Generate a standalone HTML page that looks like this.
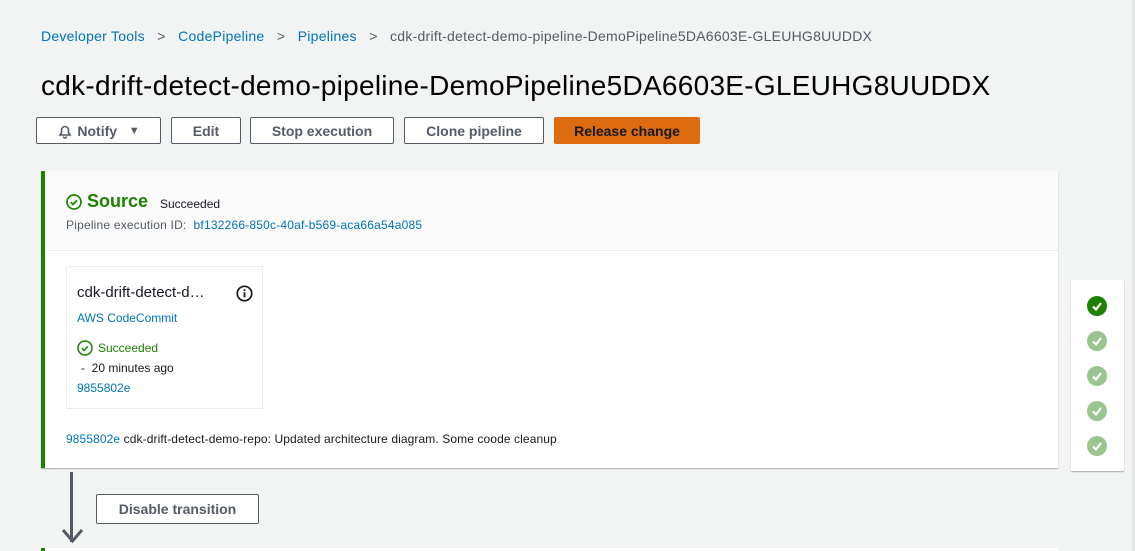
<!DOCTYPE html>
<html><head><style>
body{margin:0;width:1135px;height:551px;background:#f2f3f3;font-family:"Liberation Sans",sans-serif;position:relative;overflow:hidden;color:#16191f}
.a{position:absolute}
.lnk{color:#0073bb}
.btn{position:absolute;top:117px;height:27px;border:1px solid #545b64;background:#fff;border-radius:2px;box-sizing:border-box;font-weight:bold;font-size:14px;color:#545b64;display:flex;align-items:center;justify-content:center}
.chk{position:absolute;left:1087px;width:20px;height:20px;border-radius:50%;background:#9bc58f}
.chk svg{position:absolute;left:0;top:0}
</style></head><body>
<div class="a" style="left:1132px;top:0;width:3px;height:551px;background:#e6e8e8"></div>
<div class="a" style="left:41px;top:28px;font-size:14px;color:#545b64;white-space:nowrap;letter-spacing:0.25px">
<span class="lnk">Developer Tools</span>&nbsp;&nbsp;&nbsp;&gt;&nbsp;&nbsp;&nbsp;<span class="lnk">CodePipeline</span>&nbsp;&nbsp;&nbsp;&gt;&nbsp;&nbsp;&nbsp;<span class="lnk">Pipelines</span>&nbsp;&nbsp;&nbsp;&gt;&nbsp;&nbsp;&nbsp;cdk-drift-detect-demo-pipeline-DemoPipeline5DA6603E-GLEUHG8UUDDX</div>
<div class="a" style="left:41px;top:70px;font-size:28px;white-space:nowrap;letter-spacing:0.27px;color:#000">cdk-drift-detect-demo-pipeline-DemoPipeline5DA6603E-GLEUHG8UUDDX</div>
<div class="btn" style="left:36px;width:125px"><svg width="16" height="16" viewBox="0 0 16 16" style="margin-right:4px"><path d="M3 12h10l-1.5-2V7a3.5 3.5 0 0 0-7 0v3zM6.5 13.5a1.5 1.5 0 0 0 3 0" fill="none" stroke="#545b64" stroke-width="1.6"/></svg>Notify&nbsp;&nbsp;&nbsp;<span style="font-size:11px">▼</span></div>
<div class="btn" style="left:171px;width:70px">Edit</div>
<div class="btn" style="left:250px;width:144px">Stop execution</div>
<div class="btn" style="left:404px;width:140px">Clone pipeline</div>
<div class="btn" style="left:554px;width:146px;background:#dd6b10;border-color:#dd6b10;color:#16191f">Release change</div>
<div class="a" style="left:41px;top:171px;width:1017px;height:297px;background:#fff;box-shadow:0 1px 1px rgba(0,0,0,.3);border-left:4px solid #1d8102;box-sizing:border-box"></div>
<div class="a" style="left:45px;top:171px;width:1013px;height:79px;background:#fafafa;border-bottom:1px solid #eaeded"></div>
<svg class="a" style="left:66px;top:194px" width="16" height="16" viewBox="0 0 16 16"><circle cx="8" cy="8" r="7" fill="none" stroke="#1d8102" stroke-width="1.7"/><path d="M4.8 8.2l2.2 2.2 4-4" fill="none" stroke="#1d8102" stroke-width="1.7"/></svg>
<div class="a" style="left:87px;top:191px;font-size:18px;font-weight:bold;color:#1d8102">Source</div>
<div class="a" style="left:160px;top:197px;font-size:12px;color:#16191f">Succeeded</div>
<div class="a" style="left:66px;top:218px;font-size:12px;color:#545b64;letter-spacing:0.2px">Pipeline execution ID:&nbsp; <span class="lnk">bf132266-850c-40af-b569-aca66a54a085</span></div>
<div class="a" style="left:66px;top:266px;width:197px;height:143px;border:1px solid #eaeded;box-sizing:border-box;background:#fff"></div>
<div class="a" style="left:77px;top:284px;font-size:15px">cdk-drift-detect-d…</div>
<svg class="a" style="left:236px;top:285px" width="17" height="17" viewBox="0 0 17 17"><circle cx="8.5" cy="8.5" r="7.2" fill="none" stroke="#16191f" stroke-width="1.7"/><rect x="7.6" y="7.3" width="1.8" height="5" fill="#16191f"/><rect x="7.6" y="4.3" width="1.8" height="1.8" fill="#16191f"/></svg>
<div class="a lnk" style="left:77px;top:311px;font-size:12px">AWS CodeCommit</div>
<svg class="a" style="left:77px;top:340px" width="16" height="16" viewBox="0 0 16 16"><circle cx="8" cy="8" r="7" fill="none" stroke="#1d8102" stroke-width="1.5"/><path d="M4.8 8.2l2.2 2.2 4-4" fill="none" stroke="#1d8102" stroke-width="1.5"/></svg>
<div class="a" style="left:98px;top:341px;font-size:12px;color:#1d8102">Succeeded</div>
<div class="a" style="left:81px;top:361px;font-size:12px">-&nbsp; 20 minutes ago</div>
<div class="a lnk" style="left:77px;top:381px;font-size:12px">9855802e</div>
<div class="a" style="left:66px;top:432px;font-size:12px;letter-spacing:0.1px;white-space:nowrap"><span class="lnk">9855802e</span> cdk-drift-detect-demo-repo: Updated architecture diagram. Some coode cleanup</div>
<div class="a" style="left:70px;top:472px;width:3px;height:70px;background:#545b64"></div>
<svg class="a" style="left:61px;top:528px" width="22" height="16" viewBox="0 0 22 16"><path d="M2 2l9.5 11L21 2" fill="none" stroke="#545b64" stroke-width="3"/></svg>
<div class="btn" style="left:96px;top:494px;width:163px;height:30px">Disable transition</div>
<div class="a" style="left:41px;top:548px;width:4px;height:3px;background:#1d8102"></div>
<div class="a" style="left:45px;top:548px;width:1013px;height:3px;background:#fff"></div>
<div class="a" style="left:1071px;top:280px;width:53px;height:191px;background:#fff;box-shadow:0 1px 1px rgba(0,0,0,.3)"></div>
<div class="chk" style="top:296px;background:#1d8102"><svg width="20" height="20" viewBox="0 0 20 20"><path d="M6 10.5l3 3 5-6.5" fill="none" stroke="#fff" stroke-width="2.2"/></svg></div>
<div class="chk" style="top:331px"><svg width="20" height="20" viewBox="0 0 20 20"><path d="M6 10.5l3 3 5-6.5" fill="none" stroke="#fff" stroke-width="2.2"/></svg></div>
<div class="chk" style="top:366px"><svg width="20" height="20" viewBox="0 0 20 20"><path d="M6 10.5l3 3 5-6.5" fill="none" stroke="#fff" stroke-width="2.2"/></svg></div>
<div class="chk" style="top:401px"><svg width="20" height="20" viewBox="0 0 20 20"><path d="M6 10.5l3 3 5-6.5" fill="none" stroke="#fff" stroke-width="2.2"/></svg></div>
<div class="chk" style="top:436px"><svg width="20" height="20" viewBox="0 0 20 20"><path d="M6 10.5l3 3 5-6.5" fill="none" stroke="#fff" stroke-width="2.2"/></svg></div>
</body></html>
